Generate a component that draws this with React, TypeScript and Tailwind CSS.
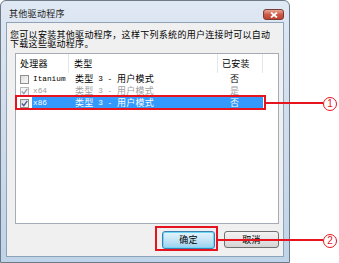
import React from "react";

function Check({ checked, disabled }: { checked?: boolean; disabled?: boolean }) {
  return (
    <div
      className={`w-[9px] h-[9px] border flex items-center justify-center ${
        disabled ? "border-[#b8b8b8] bg-[#f4f4f4]" : "border-[#8e8f8f] bg-gradient-to-br from-[#dcdcdc] to-[#fbfbfb]"
      }`}
    >
      {checked && (
        <svg width="7" height="7" viewBox="0 0 7 7">
          <path
            d="M0.8 3.6 L2.8 5.6 L6.3 0.9"
            fill="none"
            stroke={disabled ? "#9aa3b0" : "#4a5f97"}
            strokeWidth="1.4"
          />
        </svg>
      )}
    </div>
  );
}

function Row({
  name,
  installed,
  checked,
  disabled,
  selected,
}: {
  name: string;
  installed: string;
  checked?: boolean;
  disabled?: boolean;
  selected?: boolean;
}) {
  const txt = selected ? "text-white" : disabled ? "text-[#a0a0a0]" : "text-black";
  return (
    <div className="flex items-center h-[12px]">
      <div className="w-[16px] flex justify-center pl-[1px]">
        <Check checked={checked} disabled={disabled} />
      </div>
      <div className={`flex items-center h-[12px] w-[231px] ${selected ? "bg-[#3399ff]" : ""} ${txt}`}>
        <div className="w-[43px] pl-[1px] font-['Liberation_Mono',monospace] text-[7.75px] tracking-[0px] leading-[10px]">{name}</div>
        <div className="w-[149px] flex items-center leading-[10px]">
          <span>类型</span>
          <span className="font-['Liberation_Mono',monospace] text-[7.75px] tracking-[0px] whitespace-pre"> 3 - </span>
          <span>用户模式</span>
        </div>
        <div className="pl-[6px] leading-[10px]">{installed}</div>
      </div>
    </div>
  );
}

export default function App() {
  return (
    <div className="relative w-[339px] h-[263px] bg-white overflow-hidden font-['Noto_Sans_CJK_SC','Noto_Sans',sans-serif] text-[9px] tracking-[0.3px] text-black">
      {/* window */}
      <div className="w-[290px] h-[263px] rounded-t-[6px] border border-[#6f7a88] bg-gradient-to-b from-[#dfe8f3] via-[#cfdcec] to-[#bfd3e9] flex flex-col px-[5px] pb-[5px]">
        {/* title bar */}
        <div className="h-[21px] flex items-center justify-between pl-[3px] pr-[0px]">
          <span className="leading-[10px] pt-[4px] text-[#1a1a1a]">其他驱动程序</span>
          <div className="mt-[6px] w-[21px] h-[11px] rounded-[3px] border border-[#7a3a35] bg-gradient-to-b from-[#e8a593] via-[#cd5a48] to-[#c0432f] flex items-center justify-center">
            <svg width="8" height="6" viewBox="0 0 8 6">
              <path d="M1 0.5 L7 5.5 M7 0.5 L1 5.5" stroke="white" strokeWidth="1.7" />
            </svg>
          </div>
        </div>
        {/* content */}
        <div className="flex-1 border border-[#8fa3b8] bg-[#f0f0f0] flex flex-col pl-[2px] pt-[7px]">
          <div className="leading-[9px] pl-[1px]">
            您可以安装其他驱动程序，这样下列系统的用户连接时可以自动
            <br />
            下载这些驱动程序。
          </div>
          <div className="ml-[6px] mt-[5px] w-[264px] h-[171px] border border-[#a5acb5] bg-white flex flex-col">
            {/* header */}
            <div className="h-[19px] flex items-center">
              <div className="w-[53px] h-full flex items-center pl-[4px] border-r border-[#e3e6ea]">处理器</div>
              <div className="w-[149px] h-full flex items-center pl-[5px] border-r border-[#e3e6ea]">类型</div>
              <div className="w-[45px] h-full flex items-center pl-[4px] border-r border-[#e3e6ea]">已安装</div>
            </div>
            <Row name="Itanium" installed="否" />
            <Row name="x64" installed="是" checked disabled />
            <Row name="x86" installed="否" checked selected />
          </div>
          <div className="flex justify-end gap-[9px] mt-[7px] pr-[4px]">
            <div className="w-[53px] h-[18px] rounded-[3px] border border-[#3c7fb1] bg-gradient-to-b from-[#e5f4fc] via-[#c4e5f6] to-[#98d1ef] shadow-[inset_0_0_0_1px_#6fd6f6] flex items-center justify-center">
              确定
            </div>
            <div className="w-[55px] h-[17px] rounded-[3px] border border-[#707070] bg-gradient-to-b from-[#f2f2f2] via-[#e6e6e6] to-[#d3d3d3] flex items-center justify-center">
              取消
            </div>
          </div>
        </div>
      </div>

      {/* callout 1 */}
      <div className="absolute left-[15px] top-[95px] w-[251px] h-[15px] border-2 border-[#e5141e]" />
      <div className="absolute left-[266px] top-[102px] w-[57px] h-[2px] bg-[#e5141e]" />
      <div className="absolute left-[323px] top-[97px] w-[14px] h-[14px] rounded-full border border-[#e5141e] text-[#e5141e] font-['Liberation_Sans',sans-serif] text-[10px] tracking-[0px] leading-[12px] flex items-center justify-center">
        1
      </div>

      {/* callout 2 */}
      <div className="absolute left-[155px] top-[226px] w-[63px] h-[25px] border-2 border-[#e5141e]" />
      <div className="absolute left-[218px] top-[239px] w-[105px] h-[2px] bg-[#e5141e]" />
      <div className="absolute left-[323px] top-[234px] w-[14px] h-[14px] rounded-full border border-[#e5141e] text-[#e5141e] font-['Liberation_Sans',sans-serif] text-[10px] tracking-[0px] leading-[12px] flex items-center justify-center">
        2
      </div>
    </div>
  );
}
